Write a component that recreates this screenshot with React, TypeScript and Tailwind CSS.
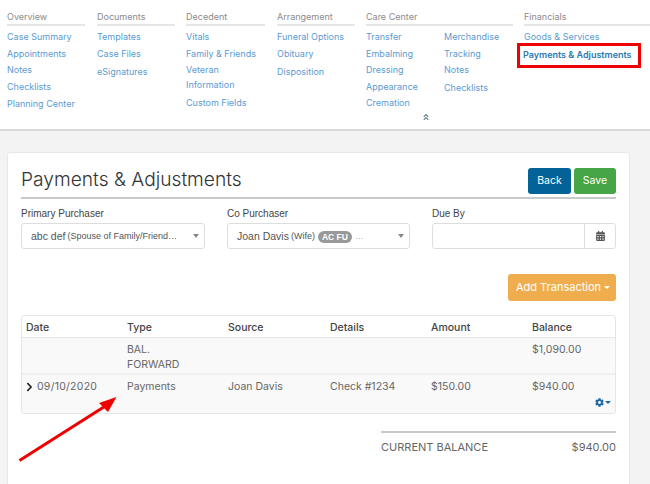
import React from "react";
import { FaAngleDoubleUp, FaCalendarAlt, FaChevronRight, FaCog } from "react-icons/fa";

const font = "font-['Inter','Liberation_Sans',sans-serif]";

function NavColumn({ title, links, className = "" }: { title: string; links: [string, string][]; className?: string }) {
  return (
    <div className={className}>
      <div className="text-[9px] leading-[13px] text-[#8a8a8a] border-b-2 border-[#e6e6e6] h-[16px]">{title}</div>
      <LinkList links={links} />
    </div>
  );
}

// second value of each tuple is the top margin class, the rows are not evenly spaced
function LinkList({ links }: { links: [string, string][] }) {
  return (
    <div className="pt-[4px]">
      {links.map(([label, mt]) => (
        <div key={label} className={`text-[9px] leading-[14px] text-[#5b9bd1] ${mt}`}>
          {label}
        </div>
      ))}
    </div>
  );
}

function Select({ label, children }: { label: string; children: React.ReactNode }) {
  return (
    <div>
      <div className="text-[10px] leading-[14px] font-['Liberation_Sans',sans-serif] text-[#444] h-[16px]">{label}</div>
      <div className="h-[26px] border border-[#ddd] rounded-[3px] bg-white flex items-center pl-[9px] pr-[5px] font-['Liberation_Sans',sans-serif] text-[#555]">
        <div className="flex-1 flex items-center whitespace-nowrap overflow-hidden pt-[2px]">{children}</div>
        <span className="w-0 h-0 border-x-[3px] border-x-transparent border-t-[4px] border-t-[#888]" />
      </div>
    </div>
  );
}

function Caret({ className }: { className: string }) {
  return <span className={`inline-block w-0 h-0 border-x-[3px] border-x-transparent border-t-[3px] ${className}`} />;
}

const colsClass = "grid grid-cols-[101px_101px_102px_101px_101px_1fr]";

export default function App() {
  return (
    <div className={`relative w-[650px] h-[484px] overflow-hidden bg-[#f3f3f3] ${font}`}>
      <div className="h-[131px] bg-white border-b-2 border-[#d8d8d8] pt-[10px] pl-[7px] relative">
        <div className="flex">
          <NavColumn
            title="Overview"
            className="w-[78px] mr-[12px]"
            links={[["Case Summary", ""], ["Appointments", "mt-[3px]"], ["Notes", "mt-[2px]"], ["Checklists", "mt-[3px]"], ["Planning Center", "mt-[3px]"]]}
          />
          <NavColumn
            title="Documents"
            className="w-[78px] mr-[11px]"
            links={[["Templates", ""], ["Case Files", "mt-[3px]"], ["eSignatures", "mt-[4px]"]]}
          />
          <NavColumn
            title="Decedent"
            className="w-[79px] mr-[12px]"
            links={[["Vitals", ""], ["Family & Friends", "mt-[3px]"], ["Veteran", "mt-[2px]"], ["Information", "mt-[1px]"], ["Custom Fields", "mt-[4px]"]]}
          />
          <NavColumn
            title="Arrangement"
            className="w-[78px] mr-[11px]"
            links={[["Funeral Options", ""], ["Obituary", "mt-[3px]"], ["Disposition", "mt-[4px]"]]}
          />
          <div className="w-[147px] mr-[11px]">
            <div className="text-[9px] leading-[13px] h-[16px] text-[#8a8a8a] border-b-2 border-[#e6e6e6]">Care Center</div>
            <div className="flex">
              <div className="w-[78px]">
                <LinkList links={[["Transfer", ""], ["Embalming", "mt-[3px]"], ["Dressing", "mt-[2px]"], ["Appearance", "mt-[3px]"], ["Cremation", "mt-[2px]"]]} />
              </div>
              <LinkList links={[["Merchandise", ""], ["Tracking", "mt-[3px]"], ["Notes", "mt-[2px]"], ["Checklists", "mt-[4px]"]]} />
            </div>
          </div>
          <NavColumn
            title="Financials"
            className="w-[126px]"
            links={[["Goods & Services", ""]]}
          />
        </div>
        <FaAngleDoubleUp className="absolute left-[422px] top-[113px] text-[#6f8790] w-[8px] h-[8px]" />
        <div className="absolute left-[517px] top-[43px] w-[124px] h-[25px] border-[3px] border-[#f00000] flex items-center pl-[3px] pb-[1px] text-[9px] font-semibold text-[#2a78b0] whitespace-nowrap">
          Payments &amp; Adjustments
        </div>
      </div>

      <div className="mt-[21px] ml-[7px] w-[623px] h-[340px] bg-white border border-[#e8e8e8] rounded-[3px] px-[13px] pt-[15px]">
        <div className="flex items-start justify-between h-[31px] border-b-2 border-[#c9c9c9]">
          <div className="text-[19.2px] leading-[20px] font-light text-[#333] pt-[1px]">Payments &amp; Adjustments</div>
          <div className="flex gap-[3px]">
            <div className="w-[43px] h-[26px] rounded-[3px] bg-[#036399] text-white text-[10.5px] flex items-center justify-center">Back</div>
            <div className="w-[42px] h-[26px] rounded-[3px] bg-[#46a546] text-white text-[10.5px] flex items-center justify-center">Save</div>
          </div>
        </div>

        <div className="grid grid-cols-[184px_183px_184px] gap-x-[22px] mt-[8px]">
          <Select label="Primary Purchaser">
            <span className="text-[10.5px]">abc def</span>
            <span className="text-[9px] ml-[2px]">(Spouse of Family/Friend…</span>
          </Select>
          <Select label="Co Purchaser">
            <span className="text-[10.5px]">Joan Davis</span>
            <span className="text-[9px] ml-[2px]">(Wife)</span>
            <span className="ml-[3px] bg-[#999] text-white text-[8.5px] font-bold rounded-full px-[4px] leading-[12px]">AC FU</span>
            <span className="text-[9px] ml-[3px] text-[#aaa]">…</span>
          </Select>
          <div>
            <div className="text-[10px] leading-[14px] font-['Liberation_Sans',sans-serif] text-[#444] h-[16px]">Due By</div>
            <div className="h-[26px] border border-[#ddd] rounded-[3px] flex justify-end">
              <div className="w-[31px] border-l border-[#ddd] flex items-center justify-center">
                <FaCalendarAlt className="w-[9px] h-[10px] text-[#555]" />
              </div>
            </div>
          </div>
        </div>

        <div className="flex justify-end mt-[25px]">
          <div className="w-[108px] h-[27px] rounded-[3px] bg-[#f0ad4e] text-white text-[11px] flex items-center justify-center gap-[3px] pl-[2px]">
            Add Transaction
            <Caret className="border-t-white" />
          </div>
        </div>

        <div className="mt-[14px] border border-[#e6e6e6] rounded-[3px] text-[10.5px] text-[#666]">
          <div className={`${colsClass} h-[22px] pt-[4px] leading-[15px] border-b border-[#e6e6e6] text-[#444] font-medium`}>
            {["Date", "Type", "Source", "Details", "Amount", "Balance"].map((h) => (
              <div key={h} className="pl-[4px]">{h}</div>
            ))}
          </div>
          <div className={`${colsClass} h-[37px] bg-[#f9f9f9] pt-[4px] leading-[15px] border-b-2 border-[#f0f0f0]`}>
            <div />
            <div className="pl-[4px]">BAL.<br />FORWARD</div>
            <div />
            <div />
            <div />
            <div className="pl-[4px]">$1,090.00</div>
          </div>
          <div className={`${colsClass} relative h-[38px] bg-[#f9f9f9] pt-[4px] leading-[15px] rounded-b-[3px]`}>
            <div className="flex items-center pl-[3px] h-[15px] tracking-[0.25px]">
              <FaChevronRight className="w-[9px] h-[10px] text-[#222] mr-[3px]" />
              09/10/2020
            </div>
            <div className="pl-[4px]">Payments</div>
            <div className="pl-[4px]">Joan Davis</div>
            <div className="pl-[4px]">Check #1234</div>
            <div className="pl-[4px]">$150.00</div>
            <div className="pl-[4px]">$940.00</div>
            <div className="absolute right-[4px] bottom-[6px] flex items-center gap-[1px]">
              <FaCog className="w-[9px] h-[9px] text-[#1f6aa5]" />
              <Caret className="border-t-[#1f6aa5]" />
            </div>
          </div>
        </div>

        <div className="ml-[360px] mt-[17px] border-t-2 border-[#c9c9c9] pt-[6px] flex justify-between text-[11px] text-[#666]">
          <span>CURRENT BALANCE</span>
          <span>$940.00</span>
        </div>
      </div>

      <svg className="absolute left-[15px] top-[392px]" width="105" height="72" viewBox="0 0 105 72">
        <path d="M4.5 68.5 L92 13" stroke="#f00000" strokeWidth="3" fill="none" />
        <path d="M101.5 5 L84 11 L93 20 Z" fill="#f00000" />
      </svg>
    </div>
  );
}
